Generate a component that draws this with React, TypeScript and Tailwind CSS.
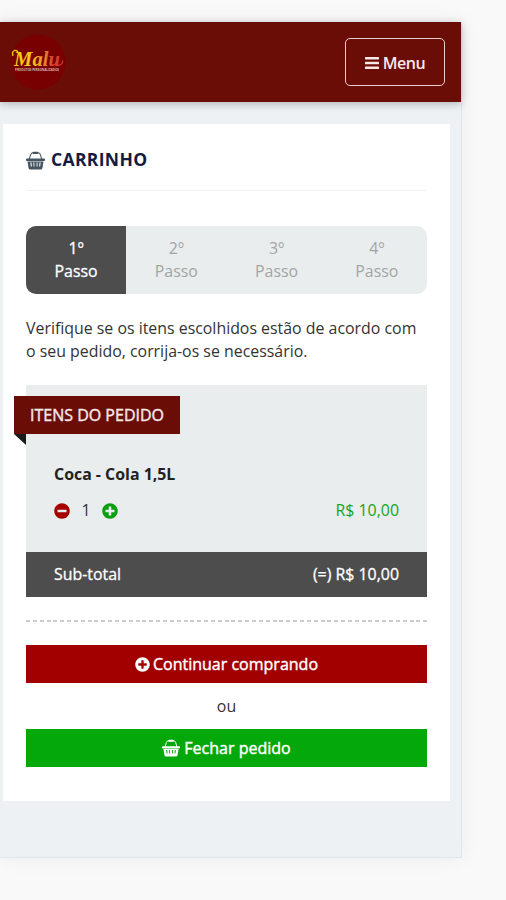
import { FaMinusCircle, FaPlusCircle } from "react-icons/fa";

interface StepProps {
  number: string;
  active?: boolean;
}

const steps = ["1º", "2º", "3º", "4º"];

function BasketIcon({ className }: { className?: string }) {
  return (
    <svg viewBox="0 0 18 18" className={className} fill="currentColor">
      <path
        d="M3 8 L4.4 3.4 Q5 1.7 6.8 1.7 H11.2 Q13 1.7 13.6 3.4 L15 8"
        fill="none"
        stroke="currentColor"
        strokeWidth="1"
      />
      <rect x="6.2" y="0.7" width="5.6" height="2.1" rx="0.9" />
      <rect x="0" y="7.2" width="18" height="2.2" rx="0.8" />
      <path
        fillRule="evenodd"
        d="M1.4 10 H16.6 L15.6 16 Q15.3 17.6 14 17.6 H4 Q2.7 17.6 2.4 16 Z M4.1 11 L4.6 14.6 H5.5 L5.2 11 Z M7 11 L7.2 14.6 H8 L7.9 11 Z M10.1 11 L10 14.6 H10.8 L11 11 Z M12.8 11 L12.5 14.6 H13.4 L13.9 11 Z"
      />
    </svg>
  );
}

function BarsIcon({ className }: { className?: string }) {
  return (
    <svg viewBox="0 0 14 14" className={className} fill="currentColor">
      <rect x="0" y="1" width="14" height="2.5" rx="0.5" />
      <rect x="0" y="5.7" width="14" height="2.5" rx="0.5" />
      <rect x="0" y="10.4" width="14" height="2.5" rx="0.5" />
    </svg>
  );
}

function Logo() {
  return (
    <svg viewBox="0 0 56 56" className="h-14 w-14 overflow-visible">
      <defs>
        <linearGradient
          id="malu"
          x1="2"
          x2="53"
          y1="0"
          y2="0"
          gradientUnits="userSpaceOnUse"
        >
          <stop offset="0" stopColor="#f5d00c" />
          <stop offset="0.45" stopColor="#f2bd1b" />
          <stop offset="0.65" stopColor="#e8842d" />
          <stop offset="0.78" stopColor="#d94434" />
          <stop offset="1" stopColor="#d03a36" />
        </linearGradient>
      </defs>
      <circle cx="28" cy="28" r="27.5" fill="#790000" />
      <text
        x="4"
        y="31.5"
        fill="url(#malu)"
        fontFamily="'Liberation Serif', cursive"
        fontSize="22"
        fontStyle="italic"
        fontWeight="700"
        textLength="46"
        lengthAdjust="spacingAndGlyphs"
      >
        Malu
      </text>
      {/* swashes at both ends of the lettering */}
      <path
        d="M3 22 Q1.5 17.5 4.5 16.5 Q7.5 16 8 19"
        fill="none"
        stroke="#f5d00c"
        strokeWidth="1.3"
      />
      <path
        d="M48.5 31 Q52 31.5 53 26.5"
        fill="none"
        stroke="#d03a36"
        strokeWidth="1.2"
      />
      <text
        x="5"
        y="37.2"
        fill="#d8b5b5"
        fontFamily="'Open Sans', sans-serif"
        fontSize="3"
        fontWeight="700"
        textLength="44"
        lengthAdjust="spacingAndGlyphs"
      >
        PRODUTOS PERSONALIZADOS
      </text>
    </svg>
  );
}

function Step({ number, active }: StepProps) {
  return (
    <div
      className={
        active
          ? "flex-1 bg-[#4d4d4d] pt-[11px] text-center text-white [-webkit-text-stroke:0.3px_currentColor]"
          : "flex-1 pt-[11px] text-center text-[#a2a5a5]"
      }
    >
      {number}
      <br />
      Passo
    </div>
  );
}

export default function App() {
  return (
    <div className="h-[900px] w-full overflow-hidden bg-[#f9f9f9] pt-[22px] font-['Open_Sans',sans-serif] text-[15.9px] leading-[23px] text-[#333]">
      <div className="h-[836px] w-[462px] border-r border-b border-[#e2e6e9] bg-[#edf1f4] shadow-[0_0_20px_rgba(0,0,0,0.06)]">
        <header className="flex h-20 items-center justify-between bg-[#6b0d07] pr-4 pl-[10px] shadow-[0_2px_8px_rgba(0,0,0,0.25)]">
          <Logo />
          <button className="flex h-12 w-[100px] items-center justify-center gap-1 rounded-[5px] border-[1.5px] border-[#e5cfce] pt-px text-base font-semibold tracking-[-0.4px] text-[#f7e8e8]">
            <BarsIcon className="h-[14px] w-[14px]" />
            Menu
          </button>
        </header>

        <main className="mt-[22px] ml-[3px] h-[677px] w-[447px] bg-white px-[23px] pt-[24px]">
          <h1 className="flex h-[43px] items-start gap-[6px] border-b border-[#f1f1f1] text-[17.5px] font-bold tracking-[0.35px] text-[#131c40]">
            <BasketIcon className="mt-[3px] h-[19px] w-[19px] text-[#465460]" />
            CARRINHO
          </h1>

          {/* Steps */}
          <div className="mt-[35px] flex h-[68px] overflow-hidden rounded-[10px] bg-[#e9eded]">
            {steps.map((number, i) => (
              <Step key={number} number={number} active={i === 0} />
            ))}
          </div>

          <p className="mt-[23px] whitespace-nowrap">
            Verifique se os itens escolhidos estão de acordo com
            <br />o seu pedido, corrija-os se necessário.
          </p>

          {/* Order items */}
          <section className="mt-[22px] h-[167px] bg-[#e9eded] pt-[11px]">
            <div className="relative -ml-3 flex h-[38px] w-[166px] items-center bg-[#6b0d07] pl-4 text-base whitespace-nowrap text-[#f6e8e6] [-webkit-text-stroke:0.4px_currentColor]">
              ITENS DO PEDIDO
              <svg
                viewBox="0 0 12 11"
                className="absolute top-full left-0 h-[11px] w-3"
              >
                <path d="M0 0 H12 V11 Z" fill="#1a1a1a" />
              </svg>
            </div>
            <div className="px-7 pt-[29px]">
              <h2 className="font-bold text-[#222]">Coca - Cola 1,5L</h2>
              <div className="mt-[13px] flex items-center">
                <FaMinusCircle className="h-4 w-4 text-[#a60000]" />
                <span className="w-8 text-center">1</span>
                <FaPlusCircle className="h-4 w-4 text-[#08a011]" />
                <span className="ml-auto text-[#18a31d]">R$ 10,00</span>
              </div>
            </div>
          </section>
          <div className="flex h-[45px] items-center justify-between bg-[#4d4d4d] px-7 text-white [-webkit-text-stroke:0.3px_currentColor]">
            <span>Sub-total</span>
            <span>(=) R$ 10,00</span>
          </div>

          <div className="mt-[23px] h-[2px] bg-[repeating-linear-gradient(90deg,#cccccc_0_4px,transparent_4px_6.85px)]" />

          <button className="mt-[23px] flex h-[38px] w-full items-center justify-center gap-[3px] bg-[#a20000] text-base text-white [-webkit-text-stroke:0.4px_currentColor]">
            <FaPlusCircle className="h-[15px] w-[15px]" />
            Continuar comprando
          </button>
          <div className="flex h-[46px] items-center justify-center">ou</div>
          <button className="flex h-[38px] w-full items-center justify-center gap-1 bg-[#04a80a] text-base text-white [-webkit-text-stroke:0.4px_currentColor]">
            <BasketIcon className="h-[18px] w-[18px]" />
            Fechar pedido
          </button>
        </main>
      </div>
    </div>
  );
}
